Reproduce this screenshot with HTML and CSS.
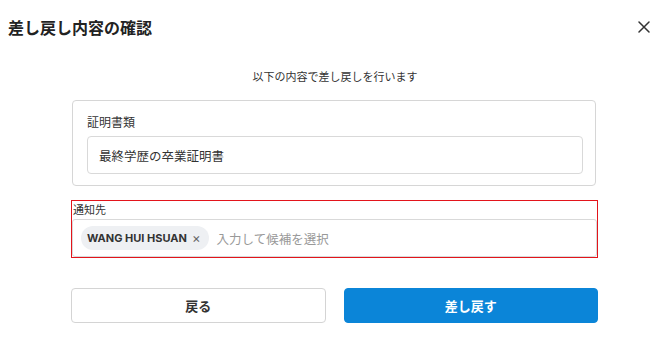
FILE: index.html
```html
<!DOCTYPE html>
<html lang="ja">
<head>
<meta charset="utf-8">
<link rel="stylesheet" href="styles.css">
</head>
<body>
<div class="dialog">
  <div class="header">
    <h1 class="title">差し戻し内容の確認</h1>
    <button class="close" aria-label="閉じる">
      <svg width="12" height="12" viewBox="0 0 12 12"><path d="M1 1L11 11M11 1L1 11" stroke="#333" stroke-width="1.5" fill="none" stroke-linecap="round"/></svg>
    </button>
  </div>
  <p class="lead">以下の内容で差し戻しを行います</p>
  <div class="content">
    <div class="card">
      <div class="card-label">証明書類</div>
      <div class="field">最終学歴の卒業証明書</div>
    </div>
    <div class="notify">
      <div class="notify-label">通知先</div>
      <div class="tag-input">
        <span class="chip">WANG HUI HSUAN<span class="chip-x">×</span></span>
        <span class="placeholder">入力して候補を選択</span>
      </div>
    </div>
    <div class="actions">
      <button class="btn btn-secondary">戻る</button>
      <button class="btn btn-primary">差し戻す</button>
    </div>
  </div>
</div>
</body>
</html>
```

FILE: styles.css
```css
* { box-sizing: border-box; }
html, body {
  margin: 0;
  padding: 0;
  background: #fff;
  font-family: "Noto Sans CJK JP", "Noto Sans", sans-serif;
  color: #333;
}
.dialog {
  width: 670px;
  height: 339px;
}
.header {
  display: flex;
  justify-content: space-between;
  align-items: center;
  padding: 15px 20px 0 8px;
  height: 39px;
}
.title {
  margin: 0;
  font-size: 16px;
  line-height: 24px;
  font-weight: 700;
  color: #222;
}
.close {
  border: none;
  background: none;
  padding: 0;
  width: 12px;
  height: 12px;
  display: flex;
}
.lead {
  margin: 29px 0 0;
  text-align: center;
  font-size: 11px;
  line-height: 16px;
  color: #333;
}
.content {
  width: 527px;
  margin: 0 0 0 71px;
  padding-top: 16px;
}
.card {
  margin: 0 2px 0 1px;
  border: 1px solid #d6d6d6;
  border-radius: 4px;
  padding: 12px 12px 11px 14px;
}
.card-label {
  font-size: 12px;
  line-height: 18px;
  color: #333;
}
.field {
  margin-top: 5px;
  height: 38px;
  border: 1px solid #d9d9d9;
  border-radius: 4px;
  padding: 0 11px;
  display: flex;
  align-items: center;
  font-size: 12.5px;
  color: #333;
}
.notify {
  margin-top: 14px;
  border: 1px solid #e3141b;
  height: 58px;
  display: flex;
  flex-direction: column;
}
.notify-label {
  font-size: 11px;
  line-height: 17px;
  padding-left: 1px;
  color: #333;
}
.tag-input {
  flex: 1;
  border: 1px solid #d9d9d9;
  border-radius: 3px;
  margin-top: 1px;
  display: flex;
  align-items: center;
  padding: 0 8px;
  gap: 8px;
}
.chip {
  display: inline-flex;
  align-items: center;
  gap: 5px;
  height: 24px;
  padding: 0 8px 0 6px;
  background: #eef0f3;
  border-radius: 12px;
  font-family: "Inter", "Liberation Sans", sans-serif;
  font-size: 11px;
  font-weight: 700;
  color: #333;
}
.chip-x {
  font-weight: 400;
  font-size: 13px;
  color: #666;
}
.placeholder {
  font-size: 12.5px;
  color: #999;
}
.actions {
  display: flex;
  gap: 18px;
  margin-top: 30px;
}
.btn {
  flex: 1;
  height: 35px;
  border-radius: 4px;
  font-family: "Noto Sans CJK JP", sans-serif;
  font-size: 13px;
  font-weight: 700;
  cursor: pointer;
}
.btn-secondary {
  background: #fff;
  border: 1px solid #d4d4d4;
  color: #333;
}
.btn-primary {
  background: #0b85d8;
  border: 1px solid #0b85d8;
  color: #fff;
}
```
